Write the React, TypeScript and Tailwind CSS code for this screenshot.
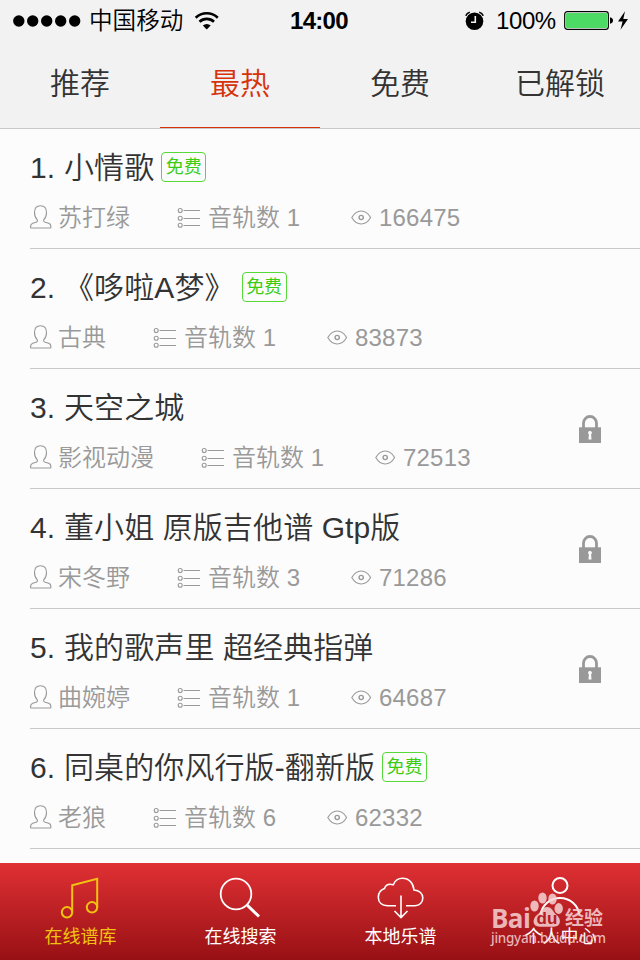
import type { ReactNode } from "react";

interface Song {
  title: string;
  artist: string;
  tracks: number;
  views: number;
  status?: "free" | "locked";
}

const TABS = ["推荐", "最热", "免费", "已解锁"];
const ACTIVE_TAB = "最热";

const SONGS: Song[] = [
  { title: "小情歌", artist: "苏打绿", tracks: 1, views: 166475, status: "free" },
  { title: "《哆啦A梦》", artist: "古典", tracks: 1, views: 83873, status: "free" },
  { title: "天空之城", artist: "影视动漫", tracks: 1, views: 72513, status: "locked" },
  { title: "董小姐 原版吉他谱 Gtp版", artist: "宋冬野", tracks: 3, views: 71286, status: "locked" },
  { title: "我的歌声里 超经典指弹", artist: "曲婉婷", tracks: 1, views: 64687, status: "locked" },
  { title: "同桌的你风行版-翻新版", artist: "老狼", tracks: 6, views: 62332, status: "free" },
];

function StatusBar() {
  return (
    <div className="flex h-[41px] items-center text-2xl leading-10 text-black">
      <div className="flex w-[290px] items-center pl-[13px]">
        <svg width="68" height="12" viewBox="0 0 68 12" fill="currentColor">
          <circle cx="5.8" cy="6" r="5.7" />
          <circle cx="19.7" cy="6" r="5.7" />
          <circle cx="33.7" cy="6" r="5.7" />
          <circle cx="47.7" cy="6" r="5.7" />
          <circle cx="61.7" cy="6" r="5.7" />
        </svg>
        <span className="ml-2 w-[105px] text-[23.6px]">中国移动</span>
        <svg width="26" height="20" viewBox="0 0 26 20" fill="none" stroke="currentColor" strokeWidth="2.6">
          <path d="M1.7 6.7a15.8 15.8 0 0 1 22.1 0" />
          <path d="M5.5 10.8a10.4 10.4 0 0 1 14.5 0" />
          <path d="M8.8 14.5a5.8 5.8 0 0 1 7.9 0l-3.95 4z" fill="currentColor" stroke="none" />
        </svg>
      </div>
      <span className="w-[175px] font-bold tracking-[-0.7px]">14:00</span>
      <svg width="20" height="20" viewBox="0 0 20 20" fill="none" stroke="currentColor">
        <circle cx="9.5" cy="10.3" r="8.8" fill="currentColor" stroke="none" />
        <path d="M.8 4.7Q1.8 2 4.8 1.2M14.2 1.2q3 .8 4 3.5" strokeWidth="1.7" />
        <path d="M10.3 5v6.3H6" stroke="#f2f2f2" strokeWidth="1.6" />
      </svg>
      <span className="ml-[11px] w-[68px] tracking-[-0.4px]">100%</span>
      <svg className="shrink-0" width="68" height="22" viewBox="0 0 68 22">
        <rect x=".7" y="1.7" width="43.6" height="17.6" rx="2.6" fill="#fff" stroke="#000" strokeWidth="1.2" />
        <rect x="2" y="3" width="41" height="15" rx="1.2" fill="#4cd964" />
        <path d="M46 7.2q3 .7 3 3.3t-3 3.3z" />
        <path d="M61 1.3 54 11.5h4.6L56.5 19.7l7.5-10.7h-4.7z" />
      </svg>
    </div>
  );
}

function FreeBadge() {
  return (
    <span className="mb-0.5 ml-[7px] flex h-[30px] w-[45px] items-center justify-center rounded-[4px] border-[1.5px] border-[#57d93a] text-[18px] leading-none font-normal tracking-normal text-[#3ccc14]">
      免费
    </span>
  );
}

function UserIcon() {
  return (
    <svg className="-mt-[3px]" width="28" height="24" viewBox="0 0 28 24" fill="none" stroke="currentColor" strokeWidth="1.1">
      <path d="M7.3 14.8C5.400 13 4.500 10.500 4.500 7.500 4.500 3 6.700.7 10.500.7s6 2.300 6 6.800c0 3-.9 5.500-2.800 7.300-.3 1.300.2 2.100 1.300 2.400l3.700 1c1.600.5 2.200 1.700 2.200 4.100q0 .7-.7.7H1.200q-.7 0-.7-.7c0-2.400.6-3.600 2.200-4.100l3.500-1c1-.3 1.400-1.100 1.100-2.400z" />
    </svg>
  );
}

function ListIcon() {
  return (
    <svg className="-mt-px" width="31" height="22" viewBox="0 0 31 22" fill="none" stroke="currentColor" strokeWidth="1.1">
      <circle cx="3.2" cy="3.5" r="2" />
      <circle cx="3.2" cy="11.3" r="2" />
      <circle cx="3.2" cy="18.3" r="2" />
      <path d="M6.5 3.5H23M6.5 11.5H23M6.5 18.5H23" />
    </svg>
  );
}

function EyeIcon() {
  return (
    <svg className="-mt-px" width="28" height="16" viewBox="0 0 28 16" fill="none" stroke="currentColor">
      <path d="M.8 7.5C3.2 3.3 6.3 1 10.2 1s7 2.300 9.400 6.500c-2.400 4.200-5.500 6.500-9.400 6.500S3.200 11.700.8 7.500z" strokeWidth="1.1" />
      <circle cx="10.2" cy="7.5" r="2.1" strokeWidth="1.4" />
    </svg>
  );
}

function LockIcon() {
  return (
    <svg width="22" height="28" viewBox="0 0 22 28">
      <path d="M4.5 13V8a6.500 6.500 0 0 1 13 0v5" fill="none" stroke="#999" strokeWidth="2.8" />
      <rect y="12.300" width="22" height="15.700" fill="#999" />
      <path d="M11 16a1.800 1.800 0 0 0-1.100 3.300L9.500 24.500h3l-.4-5.200A1.800 1.800 0 0 0 11 16z" fill="#fcfcfc" />
    </svg>
  );
}

function SongRow({ song, index }: { song: Song; index: number }) {
  return (
    <li className="ml-[30px] flex h-[120px] items-center justify-between border-b border-[#c8c8c8] pr-[39px]">
      <div className="h-full whitespace-nowrap">
        <div className="flex h-[77px] items-center text-[30px] text-[#333]">
          <span className="w-[34px]">{index}.</span>
          <span className="tracking-[0.1px]">{song.title}</span>
          {song.status === "free" && <FreeBadge />}
        </div>
        <div className="flex h-6 items-center text-2xl leading-6 text-[#999]">
          <UserIcon />
          <span className="mr-[47px]">{song.artist}</span>
          <ListIcon />
          <span className="w-[143px]">音轨数 {song.tracks}</span>
          <EyeIcon />
          <span className="tracking-[0.2px]">{song.views}</span>
        </div>
      </div>
      {song.status === "locked" && <LockIcon />}
    </li>
  );
}

function NavItem({ label, active, children }: { label: string; active?: boolean; children: ReactNode }) {
  return (
    <div className={`flex flex-1 flex-col items-center pt-3 ${active ? "text-[#f2c210]" : "text-white"}`}>
      <svg width="48" height="46" viewBox="0 0 48 46" fill="none" stroke="currentColor" strokeWidth="2">
        {children}
      </svg>
      <span className="mt-1 pl-px text-[18px] leading-6 font-normal">{label}</span>
    </div>
  );
}

function Watermark() {
  return (
    <div className="absolute bottom-[11px] left-[491px] flex w-[116px] flex-col text-[#f6d3d5]/85">
      <div className="flex h-9 items-end">
        <span className="w-[39px] font-['Open_Sans',sans-serif] text-[26px] leading-[17px] font-bold tracking-[-0.6px]">Bai</span>
        <svg className="shrink-0" width="34" height="36" viewBox="0 0 34 36" fill="currentColor">
          <ellipse cx="4.5" cy="15" rx="4.2" ry="5.5" />
          <ellipse cx="12.5" cy="7" rx="4.2" ry="5.600" />
          <ellipse cx="22.500" cy="8" rx="4.200" ry="5.600" />
          <ellipse cx="28.700" cy="17.500" rx="4.200" ry="5.400" />
          <path d="M17 16c5 0 6 5 9 7.500 6 4.500 5 12.200-2 12.200H9.500c-7 0-8-7.700-2-12.200C11 21 12 16 17 16z" />
          <text x="6.500" y="33" fontSize="17" fontWeight="bold" fill="#b51d22">du</text>
        </svg>
        <span className="ml-px text-[19px] leading-[16px] font-bold">经验</span>
      </div>
      <span className="mt-px font-['Noto_Sans',sans-serif] text-[13.5px] leading-[21px] font-medium tracking-[-0.25px]">jingyan.baidu.com</span>
    </div>
  );
}

export default function App() {
  return (
    <div className="flex h-[960px] w-[640px] flex-col overflow-hidden bg-[#fcfcfc] font-['Liberation_Sans','Noto_Sans_CJK_SC',sans-serif] font-[350]">
      <header className="h-[129px] border-b border-[#c8c8c8] bg-[#f2f2f2]">
        <StatusBar />
        <nav className="flex h-[87px]">
          {TABS.map((tab) => (
            <div
              key={tab}
              className={`flex-1 border-b text-center text-[30px] leading-[86px] ${
                tab === ACTIVE_TAB ? "border-[#d6330a] text-[#d6330a]" : "border-transparent text-[#333]"
              }`}
            >
              {tab}
            </div>
          ))}
        </nav>
      </header>

      <ul className="h-[734px]">
        {SONGS.map((song, i) => (
          <SongRow key={song.title} song={song} index={i + 1} />
        ))}
      </ul>

      <footer className="relative flex h-[97px] bg-linear-to-b from-[#e03034] to-[#981014]">
        <NavItem label="在线谱库" active>
          <circle cx="11" cy="37.3" r="5.2" />
          <circle cx="36" cy="32.3" r="5.2" />
          <path d="M16.2 37.5V10.2L41.2 3.700v28.800" />
        </NavItem>
        <NavItem label="在线搜索">
          <circle cx="20" cy="19" r="15.3" strokeWidth="1.8" />
          <path d="m31 30 12 11.500" strokeWidth="3" />
        </NavItem>
        <NavItem label="本地乐谱">
          <path
            d="M20 30.700h-8c-6.500 0-9.700-3.800-9.700-8.500 0-4.300 2.700-7.300 6.200-8.600 1-3.600 4.500-5 8.800-3.900 1.700-4.200 5.200-6.400 9.200-6.400 6.500 0 10.800 4.700 11.500 11.700 5.500.3 8.800 3.800 8.800 8 0 4.500-3.300 7.700-7.800 7.700h-9"
            strokeWidth="1.6"
          />
          <path d="M25 20.500v22M18.500 36l6.500 6.500 6.500-6.500" strokeWidth="1.6" />
        </NavItem>
        <NavItem label="个人中心">
          <circle cx="24" cy="10.5" r="7.5" />
          <path d="M4.800 39.500a19.300 18.500 0 0 1 38.400 0" />
        </NavItem>
        <Watermark />
      </footer>
    </div>
  );
}
